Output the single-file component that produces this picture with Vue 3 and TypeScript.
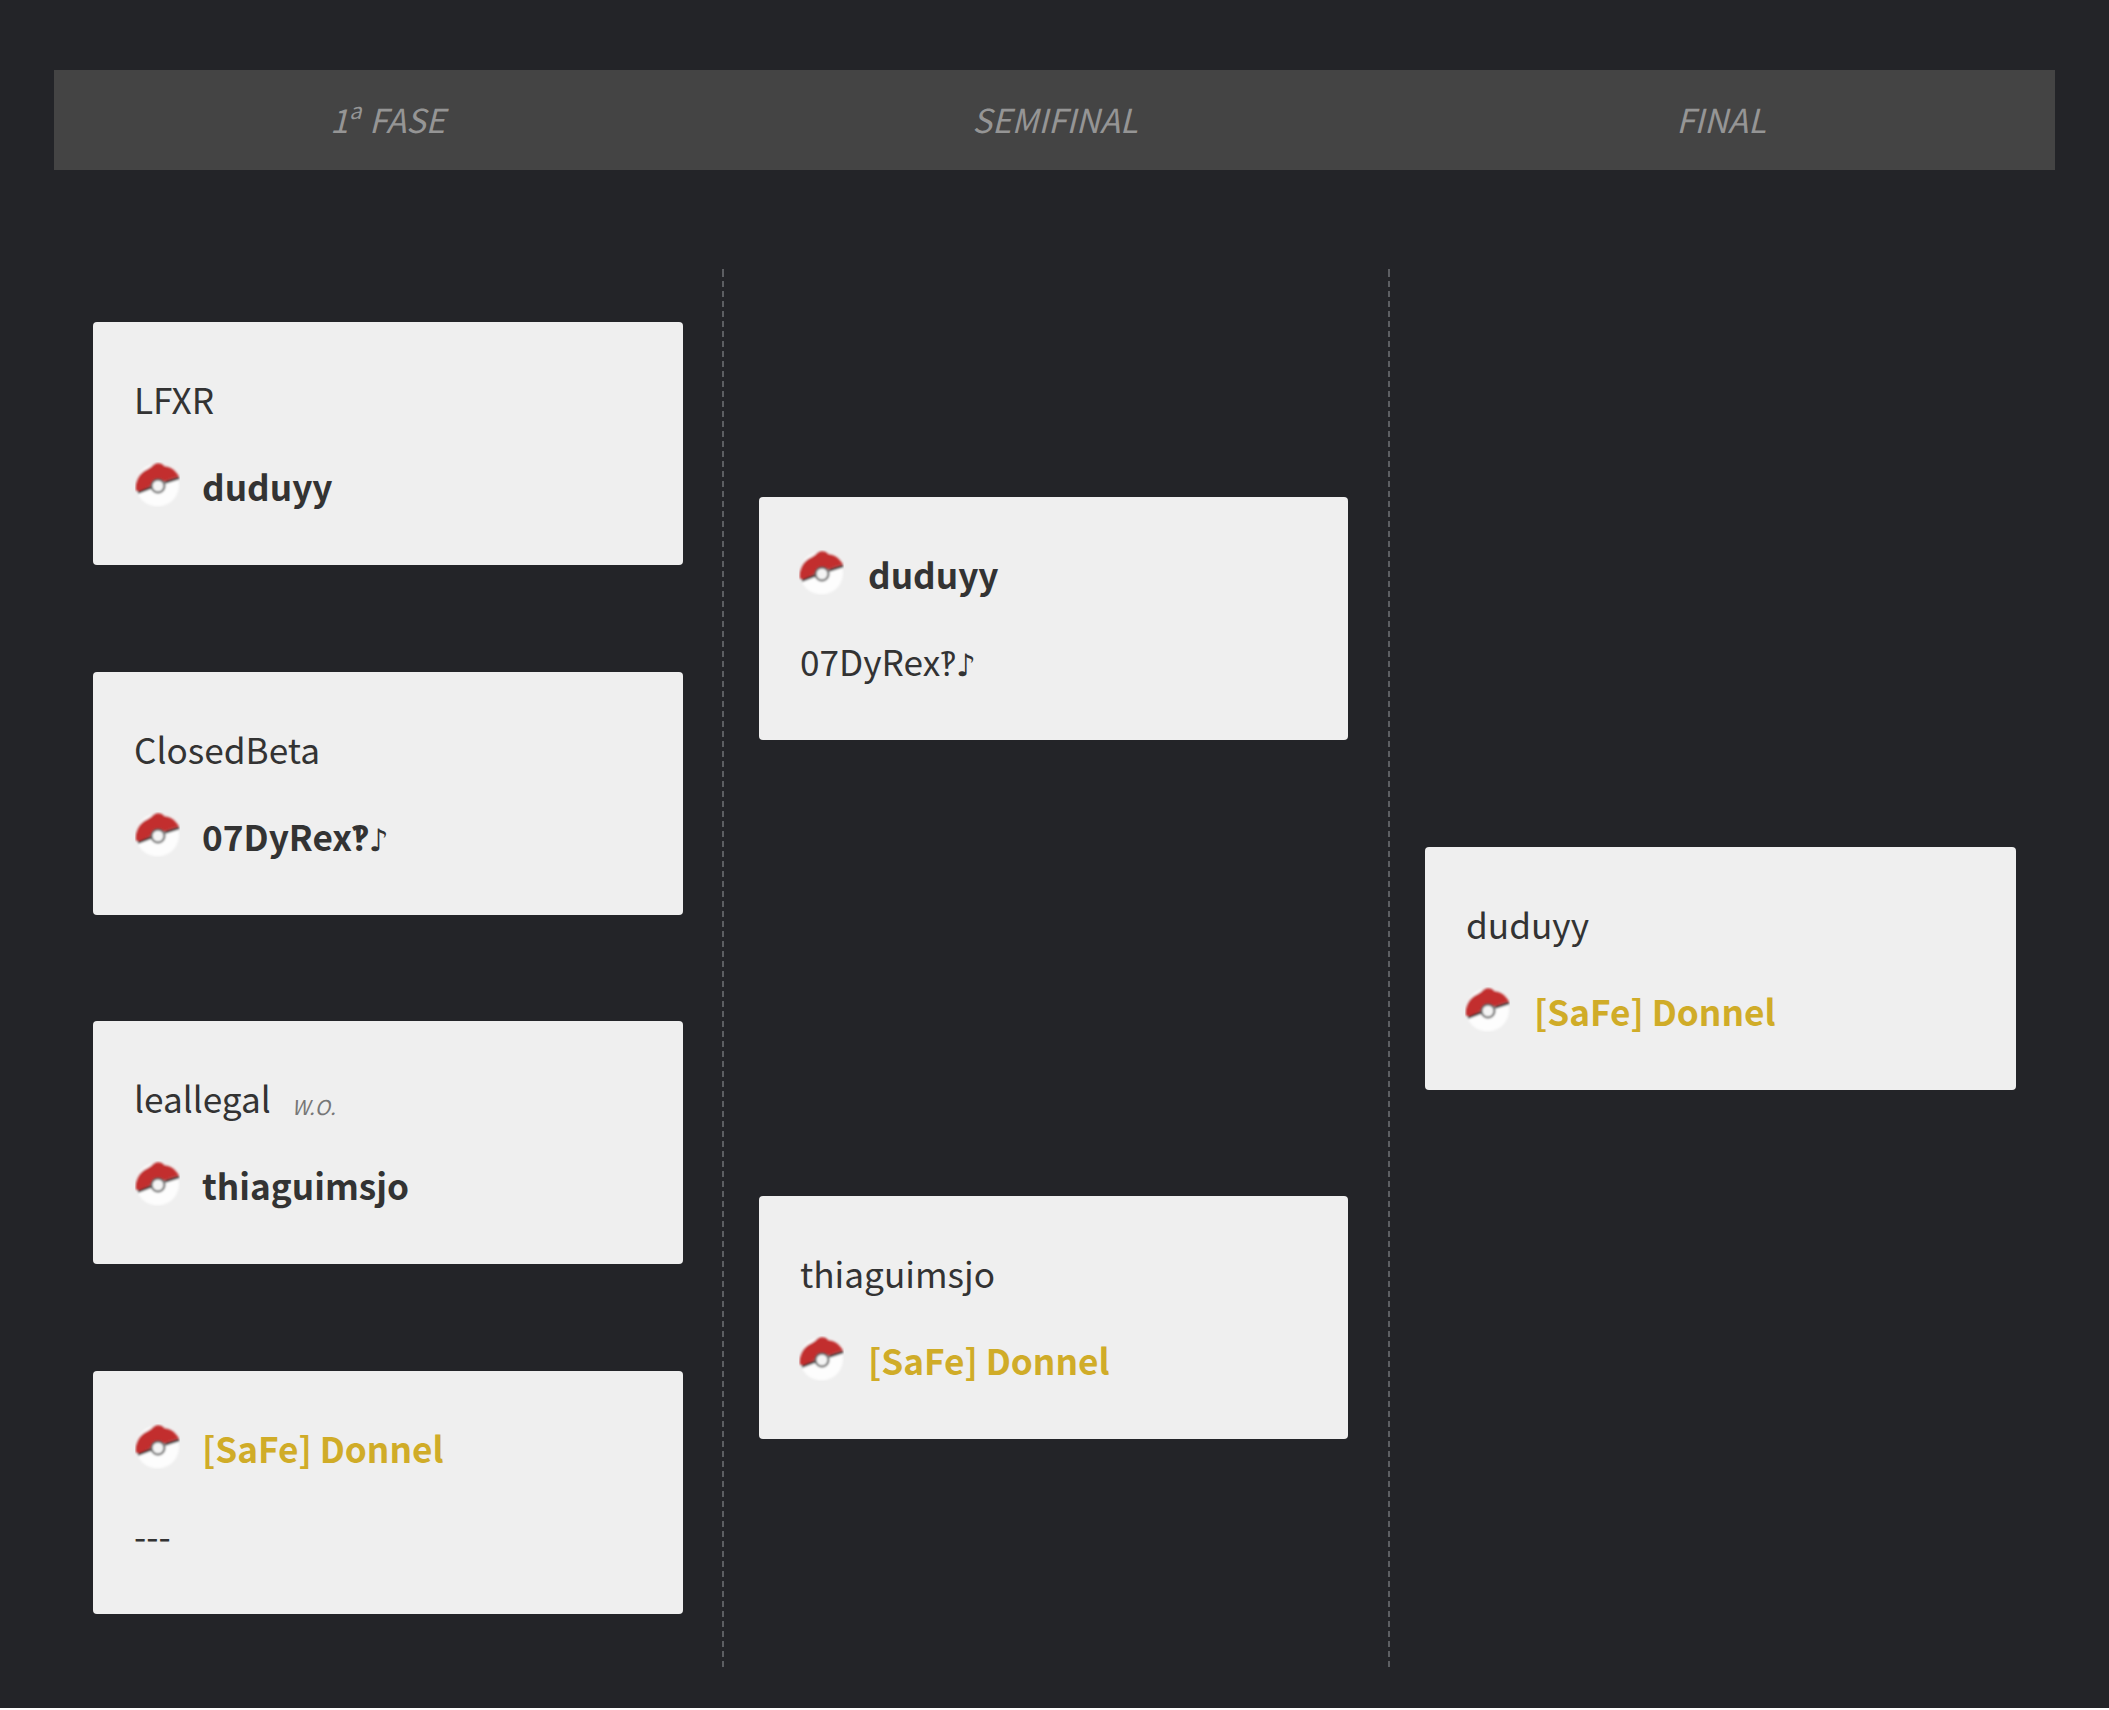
<script setup lang="ts">
interface Player { name: string; sym?: string; ball?: boolean; win?: boolean; gold?: boolean; note?: string }
interface Match { id: string; players: Player[] }
const rounds: { title: string; sup?: string; matches: Match[] }[] = [
  { title: ' FASE', sup: 'a', matches: [
    { id: 'a', players: [{ name: 'LFXR' }, { name: 'duduyy', ball: true, win: true }] },
    { id: 'b', players: [{ name: 'ClosedBeta' }, { name: '07DyRex‽', sym: '♪', ball: true, win: true }] },
    { id: 'c', players: [{ name: 'leallegal', note: 'W.O.' }, { name: 'thiaguimsjo', ball: true, win: true }] },
    { id: 'd', players: [{ name: '[SaFe] Donnel', ball: true, win: true, gold: true }, { name: '---' }] },
  ] },
  { title: 'SEMIFINAL', matches: [
    { id: 'e', players: [{ name: 'duduyy', ball: true, win: true }, { name: '07DyRex‽', sym: '♪' }] },
    { id: 'f', players: [{ name: 'thiaguimsjo' }, { name: '[SaFe] Donnel', ball: true, win: true, gold: true }] },
  ] },
  { title: 'FINAL', matches: [
    { id: 'g', players: [{ name: 'duduyy' }, { name: '[SaFe] Donnel', ball: true, win: true, gold: true }] },
  ] },
]
</script>

<template>
  <main class="page">
    <header class="heads">
      <div v-for="r in rounds" :key="r.title" class="head">
        <template v-if="r.sup">1<sup>{{ r.sup }}</sup></template>{{ r.title }}
      </div>
    </header>
    <section class="bracket">
      <div v-for="r in rounds" :key="r.title" class="col">
        <div v-for="m in r.matches" :key="m.id" class="card">
          <div v-for="p in m.players" :key="p.name" class="row">
            <svg v-if="p.ball" class="ball" viewBox="0 0 45 45" aria-hidden="true">
              <defs><filter id="soft" x="-10%" y="-10%" width="120%" height="120%"><feGaussianBlur stdDeviation="0.95" /></filter></defs>
              <g filter="url(#soft)">
                <circle cx="22.5" cy="23" r="21.5" fill="#fdfdfd" />
                <path d="M3 30.5 L16 25.5 M30 20.5 L44 16" stroke="#2e2a2a" stroke-width="2.6" fill="none" />
                <path d="M1 29 C0 20 3 13 9 9 C12 7 15 6 18 3 C22 0 27 1 30 4 C36 5 41 9 44 14.5 L32 18.5 L17 23.5 L5 29 Z" fill="#c22f2f" />
                <circle cx="23" cy="24" r="6.5" fill="#f4f4f4" stroke="#555" stroke-width="2" />
              </g>
            </svg>
            <span class="name" :class="{ win: p.win, gold: p.gold }">{{ p.name }}<span v-if="p.sym" class="sym">{{ p.sym }}</span></span>
            <span v-if="p.note" class="note">{{ p.note }}</span>
          </div>
        </div>
      </div>
    </section>
  </main>
</template>

<style scoped>
.page {
  box-sizing: border-box;
  height: 1708px;
  padding: 70px 54px 0;
  background: #232428;
  font-family: "Noto Sans CJK JP", "Noto Sans", sans-serif;
  color: #333;
}
.heads {
  display: grid;
  grid-template-columns: 669px 666px 666px;
  height: 100px;
  background: #444;
}
.head {
  display: flex;
  justify-content: center;
  align-items: center;
  padding: 0 2px 3px 0;
  font-size: 33px;
  font-style: italic;
  color: #959595;
  white-space: pre;
}
.head sup {
  font-size: 22px;
  line-height: 1;
  align-self: flex-start;
  margin-top: 28px;
  margin-left: 1px;
}
.bracket {
  display: grid;
  grid-template-columns: 668px 666px 667px;
  height: 1398px;
  margin-top: 99px;
}
.col {
  box-sizing: border-box;
  display: flex;
  flex-direction: column;
  justify-content: space-around;
  padding: 0 40px 0 37px;
  background:
    linear-gradient(#5c5e62, #5c5e62) left top / 2px 2px no-repeat,
    repeating-linear-gradient(to bottom, transparent 0 2px, #5c5e62 2px 8px, transparent 8px 10px) left top / 2px 100% no-repeat;
}
.col:first-child {
  padding: 0 39px;
  background: none;
}
.col:last-child {
  padding: 0 39px 0 37px;
}
.card {
  box-sizing: border-box;
  height: 243px;
  padding: 54.5px 41px 0 40px;
  background: #efefef;
  border-radius: 4px;
}
.col:first-child .card { padding-left: 42px; }
.row {
  display: flex;
  align-items: center;
  height: 44px;
  margin-bottom: 43px;
  font-size: 35.2px;
}
.ball {
  width: 45px;
  height: 45px;
  margin-right: 23px;
  flex: none;
  transform: translateY(-1px);
}
.name { white-space: nowrap; font-weight: 400; color: #333; margin-left: 1px; }
.col:first-child .name { margin-left: -1px; }
.name.win { font-weight: 700; }
.name.gold { color: #d0ac28; }
.sym {
  font-family: "DejaVu Sans", sans-serif;
  font-size: 31px;
}
.note {
  margin-left: 21px;
  font-size: 20.5px;
  font-style: italic;
  color: #777;
  transform: translateY(8px);
}
</style>

<style>
body { background: #fff; }
</style>
